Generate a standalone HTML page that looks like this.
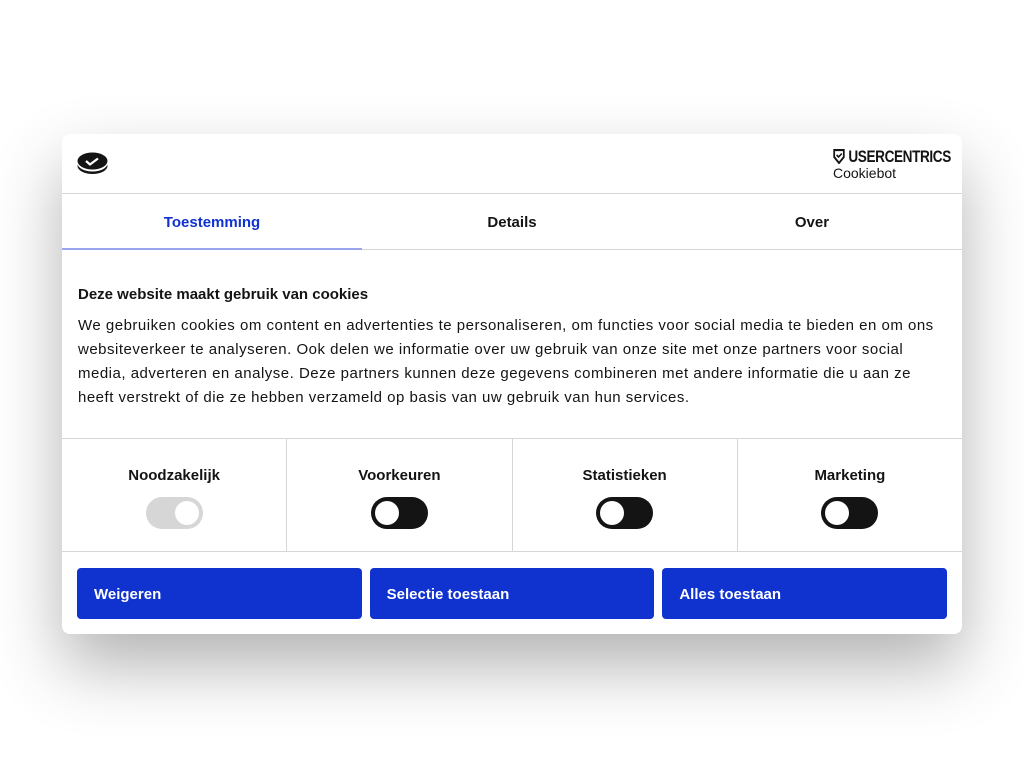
<!DOCTYPE html>
<html><head><meta charset="utf-8"><style>
*{box-sizing:border-box;margin:0;padding:0}
body{width:1024px;height:768px;background:#fff;font-family:"Liberation Sans",Arial,sans-serif;color:#141414;position:relative;overflow:hidden}
.d{position:absolute;left:62px;top:134px;width:900px;height:500px;background:#fff;border-radius:8px;box-shadow:0 32px 68px rgba(0,0,0,.3);overflow:hidden}
.hd{height:60px;border-bottom:1px solid #d6d6d6;position:relative}
.tabs{height:56px;border-bottom:1px solid #d6d6d6;display:flex}
.tab{flex:1;text-align:center;font-weight:bold;font-size:15px;line-height:58px;position:relative}
.tab.a{color:#1032cf}
.tab.a:after{content:"";position:absolute;left:0;right:0;bottom:-1px;height:2px;background:#98a5ec}
.body{padding:36px 16px 0;height:189px;border-bottom:1px solid #d6d6d6}
h2{font-size:15px;font-weight:bold;margin-bottom:11px}
p{font-size:15px;line-height:24px;letter-spacing:.5px;white-space:nowrap}
.tg{display:flex;height:113px;border-bottom:1px solid #d6d6d6}
.c{flex:1;text-align:center;border-right:1px solid #d6d6d6;padding-top:28px;font-weight:bold;font-size:15px}
.c:last-child{border-right:0}
.sw{width:57px;height:32px;border-radius:16px;background:#141414;margin:13px auto 0;position:relative}
.sw:after{content:"";position:absolute;left:4px;top:4px;width:24px;height:24px;border-radius:50%;background:#fff}
.sw.dis{background:#d6d6d6}.sw.dis:after{left:29px}
.btns{display:flex;gap:8px;padding:16px 15px}
.b{flex:1;height:51px;background:#1032cf;color:#fff;border-radius:4px;font-weight:bold;font-size:15px;line-height:53px;padding-left:17px}
</style></head><body>
<div class="d">
<div class="hd">
<svg style="position:absolute;left:15px;top:17px" width="31" height="24" viewBox="0 0 31 24"><ellipse cx="15.5" cy="15" rx="15" ry="8" fill="#141414"/><ellipse cx="15.5" cy="12.5" rx="15" ry="8" fill="#fff"/><ellipse cx="15.5" cy="10" rx="15" ry="8.5" fill="#141414"/><path d="M9 10 l4 3.5 l8-6" stroke="#fff" stroke-width="2.2" fill="none"/></svg>
<div style="position:absolute;left:771px;top:14px;line-height:1">
<div style="font-weight:bold;font-size:17px;letter-spacing:-.5px;transform:scaleX(.8);transform-origin:left;white-space:nowrap"><svg width="15" height="15" viewBox="0 0 14 15" style="vertical-align:-2px"><path d="M1 1h12v7l-6 6-6-6z" fill="none" stroke="#141414" stroke-width="2.2"/><path d="M4 6l2.5 2 4-3.5" stroke="#141414" stroke-width="1.8" fill="none"/></svg> USERCENTRICS</div>
<div style="font-size:14px;margin-top:1px">Cookiebot</div></div>
</div>
<div class="tabs"><div class="tab a">Toestemming</div><div class="tab">Details</div><div class="tab">Over</div></div>
<div class="body"><h2>Deze website maakt gebruik van cookies</h2>
<p>We gebruiken cookies om content en advertenties te personaliseren, om functies voor social media te bieden en om ons<br>websiteverkeer te analyseren. Ook delen we informatie over uw gebruik van onze site met onze partners voor social<br>media, adverteren en analyse. Deze partners kunnen deze gegevens combineren met andere informatie die u aan ze<br>heeft verstrekt of die ze hebben verzameld op basis van uw gebruik van hun services.</p></div>
<div class="tg"><div class="c">Noodzakelijk<div class="sw dis"></div></div><div class="c">Voorkeuren<div class="sw"></div></div><div class="c">Statistieken<div class="sw"></div></div><div class="c">Marketing<div class="sw"></div></div></div>
<div class="btns"><div class="b">Weigeren</div><div class="b">Selectie toestaan</div><div class="b">Alles toestaan</div></div>
</div>
</body></html>
